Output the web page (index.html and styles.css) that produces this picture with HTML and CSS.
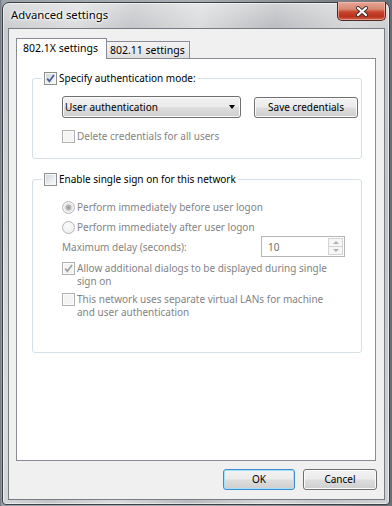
FILE: index.html
```html
<!DOCTYPE html>
<html>
<head>
<meta charset="utf-8">
<title>Advanced settings</title>
<link rel="stylesheet" href="styles.css">
</head>
<body>
<div class="desktop">
  <div class="window">
    <div class="titlebar">
      <span class="title">Advanced settings</span>
      <div class="close">
        <svg width="14" height="11" viewBox="0 0 14 11">
          <path d="M3 2 L11 9 M11 2 L3 9" stroke="#3b3033" stroke-width="4" stroke-linecap="round" fill="none"/>
          <path d="M3 2 L11 9 M11 2 L3 9" stroke="#ffffff" stroke-width="2.2" stroke-linecap="round" fill="none"/>
        </svg>
      </div>
    </div>
    <div class="client">
      <div class="tabs">
        <div class="tab active">802.1X settings</div>
        <div class="tab">802.11 settings</div>
      </div>
      <div class="tabpanel">
        <fieldset class="group g1">
          <legend><span class="lg"><span class="chk">
            <svg width="11" height="11" viewBox="0 0 11 11"><path d="M2.2 5.6 L4.4 8.3 L9 2" stroke="#4b5e99" stroke-width="1.8" fill="none"/></svg>
          </span>Specify authentication mode:</span></legend>
          <div class="row1">
            <div class="combo">User authentication<span class="arrow"></span></div>
            <div class="btn save">Save credentials</div>
          </div>
          <div class="opt dis del"><span class="chk off"></span><span class="txt">Delete credentials for all users</span></div>
        </fieldset>
        <fieldset class="group g2">
          <legend><span class="lg"><span class="chk"></span>Enable single sign on for this network</span></legend>
          <div class="opt dis"><span class="radio off sel"></span><span class="txt">Perform immediately before user logon</span></div>
          <div class="opt dis r2"><span class="radio off"></span><span class="txt">Perform immediately after user logon</span></div>
          <div class="delay dis">
            <span class="dlabel">Maximum delay (seconds):</span>
            <div class="spin">
              <span class="val">10</span>
              <span class="arrows"><span class="up"></span><span class="down"></span></span>
            </div>
          </div>
          <div class="opt dis allow"><span class="chk off">
            <svg width="11" height="11" viewBox="0 0 11 11"><path d="M2.2 5.6 L4.4 8.3 L9 2" stroke="#a3a3a3" stroke-width="1.8" fill="none"/></svg>
          </span><span class="txt">Allow additional dialogs to be displayed during single<br>sign on</span></div>
          <div class="opt dis net"><span class="chk off"></span><span class="txt">This network uses separate virtual LANs for machine<br>and user authentication</span></div>
        </fieldset>
      </div>
      <div class="buttons">
        <div class="btn default ok">OK</div>
        <div class="btn cancel">Cancel</div>
      </div>
    </div>
  </div>
</div>
</body>
</html>
```

FILE: styles.css
```css
* { box-sizing: border-box; }
html, body { margin: 0; padding: 0; }
body {
  width: 392px;
  height: 506px;
  overflow: hidden;
  font-family: "Noto Sans", "Open Sans", sans-serif;
  font-size: 10px;
  color: #000;
  background: #8d949b;
}
.desktop {
  height: 506px;
  padding: 2px 2px 1px 2px;
  background: linear-gradient(90deg, #6b7580 0px, #9aa2aa 2px, #a8adb2 50%, #6a6f75 100%);
}
.window {
  width: 388px;
  height: 503px;
  border: 1px solid #3d4146;
  border-radius: 7px 7px 4px 4px;
  padding: 0 4px 4px 5px;
  display: flex;
  flex-direction: column;
  background:
    linear-gradient(180deg, rgba(255,255,255,0.35) 0px, rgba(255,255,255,0) 28px),
    linear-gradient(100deg, #c7c9cc 0%, #dadbdd 16%, #c2c4c7 28%, #d9dadc 42%, #b8babd 58%, #d4d5d7 74%, #c3c5c8 88%, #d0d1d3 100%);
  box-shadow: inset 0 0 0 1px rgba(255,255,255,0.55);
}
.titlebar {
  height: 25px;
  flex: none;
  display: flex;
  align-items: flex-start;
  justify-content: space-between;
}
.title {
  padding: 4px 0 0 3px;
  font-size: 11.3px;
  line-height: 16px;
  text-shadow: 0 0 5px #fff, 0 0 3px #fff, 0 0 2px #fff;
}
.close {
  width: 49px;
  height: 19px;
  margin-top: -1px;
  margin-right: -1px;
  border: 1px solid #4b2a25;
  border-top: none;
  border-radius: 0 0 5px 5px;
  background: linear-gradient(180deg, #e6a797 0%, #d88772 40%, #c7462f 55%, #b8321d 80%, #d2614a 100%);
  box-shadow: inset 0 0 0 1px rgba(255, 200, 185, 0.55);
  display: flex;
  align-items: center;
  justify-content: center;
}
.client {
  flex: 1;
  display: flex;
  flex-direction: column;
  border: 1px solid #777c82;
  background: #f0f0f0;
  padding: 9px 7px 9px 7px;
}
.tabs {
  height: 20px;
  flex: none;
  display: flex;
  align-items: flex-end;
  font-size: 10.5px;
}
.tab {
  height: 17px;
  width: 84px;
  margin-left: -1px;
  padding-left: 3px;
  border: 1px solid #898c95;
  border-bottom: none;
  background: linear-gradient(180deg, #f3f3f3 0%, #ebebeb 50%, #dedede 100%);
  line-height: 16px;
  white-space: nowrap;
}
.tab.active {
  height: 21px;
  width: 91px;
  margin-left: 0;
  margin-bottom: -1px;
  padding-left: 6px;
  background: #fff;
  position: relative;
  z-index: 1;
  line-height: 19px;
}
.tabpanel {
  flex: 1;
  border: 1px solid #898c95;
  background: #fff;
  margin-right: 1px;
  padding: 12px 13px 0 15px;
}
.group {
  border: 1px solid #d5dfe5;
  border-radius: 3px;
  margin: 0;
  min-width: 0;
}
legend {
  padding: 0 2px;
  margin-left: -20px;
}
.lg {
  display: flex;
  align-items: center;
  height: 15px;
  line-height: 15px;
  white-space: nowrap;
}
.lg .chk { margin-right: 2px; }
.g1 { padding: 10px 3px 15px 29px; }
.g2 { margin-top: 13px; padding: 14px 16px 33px 29px; }

.chk {
  width: 13px;
  height: 13px;
  flex: none;
  border: 1px solid #8e8f8f;
  background: linear-gradient(135deg, #cdd1d6 0%, #eceef0 60%, #fafafa 100%);
  box-shadow: inset 0 0 0 1px #f6f6f6;
  display: flex;
  align-items: center;
  justify-content: center;
}
.chk svg { display: block; }
.chk.off {
  border-color: #b1b1b1;
  background: #f4f4f4;
  box-shadow: inset 0 0 0 1px #fbfbfb;
}
.radio {
  width: 13px;
  height: 13px;
  flex: none;
  border-radius: 50%;
  border: 1px solid #8e8f8f;
  background: radial-gradient(circle at 40% 35%, #fafafa, #dcdcdc);
}
.radio.off {
  border-color: #b6b6b6;
  background: radial-gradient(circle at 40% 35%, #fbfbfb, #ececec);
}
.radio.sel {
  background:
    radial-gradient(circle at 50% 50%, #9c9c9c 0, #b3b3b3 2.5px, #dedede 3.2px, #f6f6f6 5px);
}

.row1 {
  display: flex;
  align-items: flex-end;
}
.btn {
  height: 21px;
  flex: none;
  border: 1px solid #707070;
  border-radius: 3px;
  background: linear-gradient(180deg, #f2f2f2 0%, #ebebeb 48%, #dddddd 52%, #cfcfcf 100%);
  box-shadow: inset 0 0 0 1px #fbfbfb;
  display: flex;
  align-items: center;
  justify-content: center;
  line-height: 13px;
  white-space: nowrap;
}
.combo {
  width: 179px;
  height: 22px;
  border: 1px solid #707070;
  border-radius: 3px;
  background: linear-gradient(180deg, #f2f2f2 0%, #ebebeb 48%, #dddddd 52%, #cfcfcf 100%);
  box-shadow: inset 0 0 0 1px #fbfbfb;
  display: flex;
  align-items: center;
  padding-left: 2px;
  padding-right: 5px;
  white-space: nowrap;
}
.arrow {
  margin-left: auto;
  width: 0;
  height: 0;
  border-left: 3.5px solid transparent;
  border-right: 3.5px solid transparent;
  border-top: 4px solid #000;
}
.save {
  width: 104px;
  margin-left: 13px;
}
.opt {
  display: flex;
  align-items: flex-start;
  line-height: 13px;
  white-space: nowrap;
}
.opt .chk, .opt .radio { margin-right: 2px; }
.dis { color: #838383; }
.del { margin-top: 12px; }
.r2 { margin-top: 7px; }
.delay {
  margin-top: 2px;
  height: 21px;
  display: flex;
  align-items: center;
}
.spin {
  margin-left: auto;
  width: 84px;
  height: 21px;
  border: 1px solid #b5b5b5;
  background: #fff;
  display: flex;
  align-items: center;
  padding-left: 6px;
  padding-right: 1px;
}
.val { color: #6d6d6d; }
.arrows {
  margin-left: auto;
  width: 15px;
  height: 17px;
  display: flex;
  flex-direction: column;
}
.arrows span {
  flex: 1;
  border: 1px solid #d4d4d4;
  background: #f6f6f6;
  position: relative;
}
.arrows .up { border-bottom: none; }
.arrows .up::after, .arrows .down::after {
  content: "";
  position: absolute;
  left: 4px;
  width: 0;
  height: 0;
  border-left: 3px solid transparent;
  border-right: 3px solid transparent;
}
.arrows .up::after { top: 2px; border-bottom: 3px solid #b0b0b0; }
.arrows .down::after { top: 2px; border-top: 3px solid #b0b0b0; }
.allow { margin-top: 5px; }
.net { margin-top: 5px; }

.buttons {
  flex: none;
  margin-top: 8px;
  display: flex;
  justify-content: flex-end;
  gap: 8px;
}
.ok { width: 72px; }
.cancel { width: 74px; }
.btn.default {
  border-color: #3c8ccf;
  box-shadow: inset 0 0 0 1px #a6e1fb;
}
```
